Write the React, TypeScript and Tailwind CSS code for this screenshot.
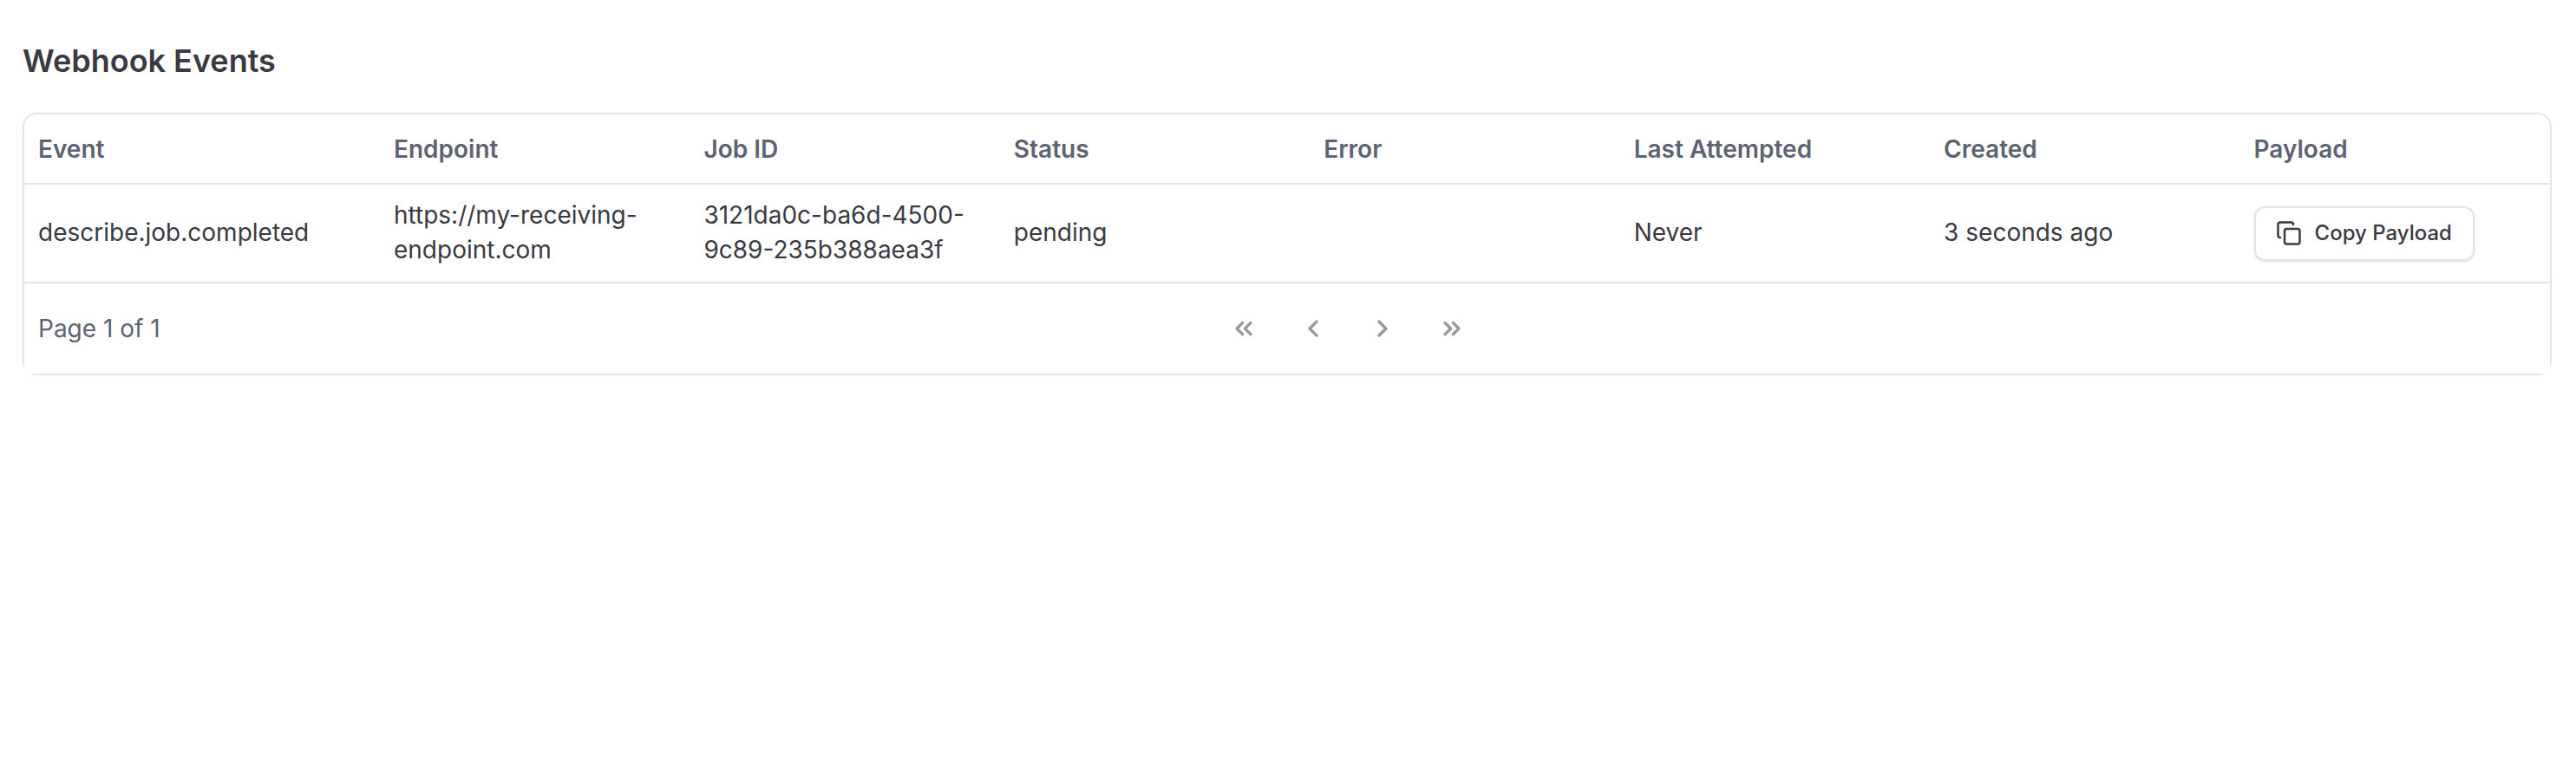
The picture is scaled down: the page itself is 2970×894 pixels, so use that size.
import { Copy, ChevronLeft, ChevronRight, ChevronsLeft, ChevronsRight } from "lucide-react";

const heads = ["Event", "Endpoint", "Job ID", "Status", "Error", "Last Attempted", "Created", "Payload"];

export default function App() {
  return (
    <div className="min-h-[894px] bg-white pl-[26px] pr-[28px] pt-[48px] font-['Inter',sans-serif] text-[#3a3a42]">
      <h1 className="text-[36px] leading-[44px] font-semibold mb-[38px]">Webhook Events</h1>
      <div className="rounded-[16px] overflow-hidden">
        <div className="border-2 border-[#e2e6ea] rounded-t-[16px]">
          <table className="w-full table-fixed border-collapse">
            <colgroup>
              <col className="w-[410px]" />
              <col span={7} />
            </colgroup>
            <thead>
              <tr className="h-[80px] border-b-2 border-[#e2e6ea]">
                {heads.map((h) => (
                  <th key={h} className="px-[16px] text-left text-[28px] font-semibold text-[#5d6372]">{h}</th>
                ))}
              </tr>
            </thead>
            <tbody>
              <tr className="h-[114px] border-b-2 border-[#e2e6ea] text-[28px] leading-[40px]">
                <td className="px-[16px] pb-[2px]">describe.job.completed</td>
                <td className="px-[16px] pb-[2px]">https://my-receiving-endpoint.com</td>
                <td className="px-[16px] pb-[2px]">3121da0c-ba6d-4500-9c89-235b388aea3f</td>
                <td className="px-[16px] pb-[2px]">pending</td>
                <td className="px-[16px] pb-[2px]"></td>
                <td className="px-[16px] pb-[2px]">Never</td>
                <td className="px-[16px] pb-[2px]">3 seconds ago</td>
                <td className="px-[16px]">
                  <button className="flex items-center h-[63px] w-[254px] pl-[23px] gap-[15px] rounded-[12px] border-2 border-[#e2e6ea] shadow-sm text-[24px] font-medium">
                    <Copy className="w-[30px] h-[30px]" strokeWidth={2} />
                    Copy Payload
                  </button>
                </td>
              </tr>
            </tbody>
          </table>
          <div className="flex items-center h-[104px] pl-[16px]">
            <span className="w-[1374px] text-[28px] text-[#5d6372]">Page 1 of 1</span>
            <div className="flex gap-[48px] text-[#999999]">
              <ChevronsLeft className="w-[32px] h-[32px]" strokeWidth={2.5} />
              <ChevronLeft className="w-[32px] h-[32px]" strokeWidth={2.5} />
              <ChevronRight className="w-[32px] h-[32px]" strokeWidth={2.5} />
              <ChevronsRight className="w-[32px] h-[32px]" strokeWidth={2.5} />
            </div>
          </div>
        </div>
      </div>
    </div>
  );
}
